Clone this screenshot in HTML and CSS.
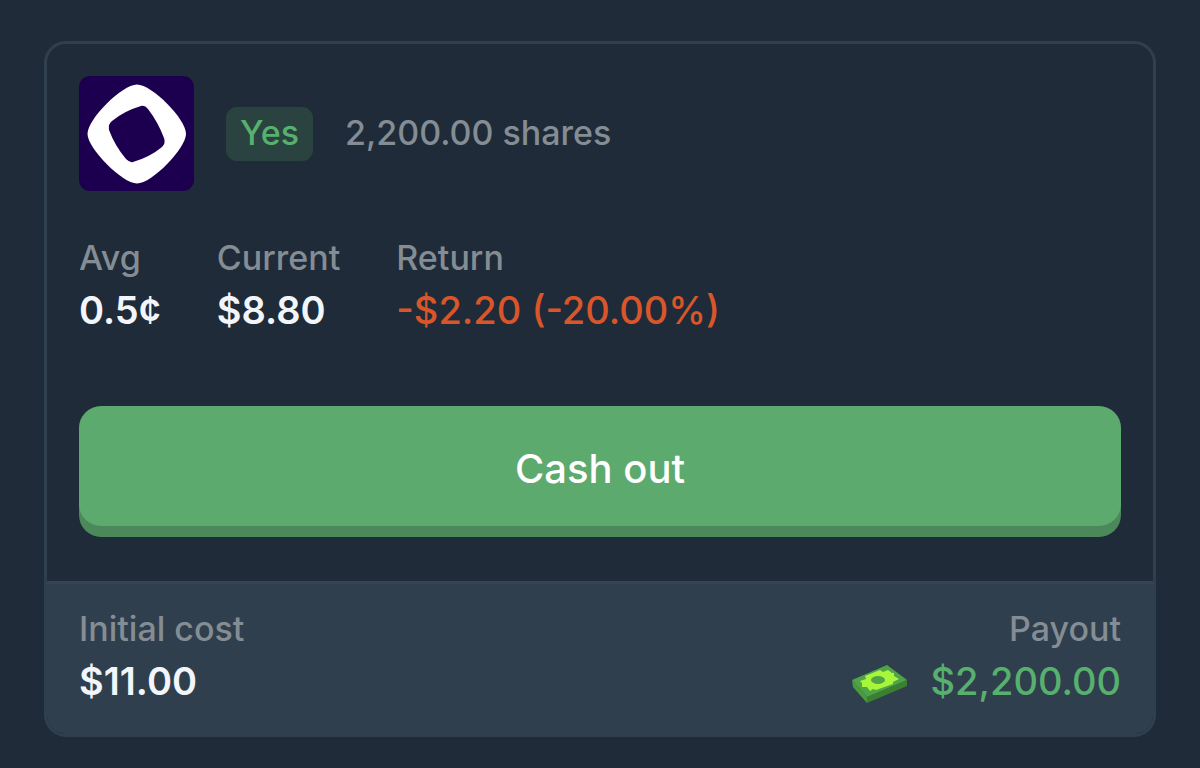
FILE: index.html
```html
<!DOCTYPE html>
<html lang="en">
<head>
<meta charset="utf-8">
<title>Position</title>
<link rel="stylesheet" href="styles.css">
</head>
<body>
<article class="card">
  <div class="body">
    <header class="head">
      <svg class="logo" viewBox="0 0 115 115" aria-hidden="true">
        <rect width="115" height="115" rx="11" fill="#1c004f"/>
        <path fill="#fff" d="M58 8.500C73 8.500 107 43 107 58C107 72 73 107.500 58 107.500C43 107.500 8.500 72 8.500 58C8.500 43 43 8.500 58 8.500Z"/>
        <path fill="#1c004f" d="M62 30Q66 29 69 33Q79 46 85 62Q87 67 83 71Q71 81 54 86Q51 87 47 83Q36 70 30 54Q29 48 33 45Q45 35 62 30Z"/>
      </svg>
      <span class="badge">Yes</span>
      <span class="shares">2,200.00 shares</span>
    </header>
    <dl class="stats">
      <div class="stat"><dt>Avg</dt><dd>0.5¢</dd></div>
      <div class="stat"><dt>Current</dt><dd>$8.80</dd></div>
      <div class="stat"><dt>Return</dt><dd class="loss">-$2.20 (-20.00%)</dd></div>
    </dl>
    <button class="cashout" type="button">Cash out</button>
  </div>
  <dl class="footer">
    <div class="stat"><dt>Initial cost</dt><dd>$11.00</dd></div>
    <div class="stat end">
      <dt>Payout</dt>
      <dd class="payout">
        <svg class="cash" viewBox="0 0 56 38" aria-hidden="true">
          <path fill="#4a9b3e" d="M0 15L15 32V38L1 22Z"/>
          <path fill="#39812f" d="M15 32L55 15V21L15 38Z"/>
          <path fill="#4fa447" d="M0 15L35 0L55 15L15 32Z"/>
          <path fill="#a8f63c" d="M8 16L14 14L13 11L28 5L31 7L36 5L40 8L42 8V11L47 14L41 17L41 19L24 25L21 24L18 26L15 22L10 22V18Z"/>
          <ellipse cx="26" cy="15" rx="7" ry="4" fill="#4fa447"/>
        </svg>
        <span>$2,200.00</span>
      </dd>
    </div>
  </dl>
</article>
</body>
</html>
```
FILE: styles.css
```css
* {
  box-sizing: border-box;
}

body {
  margin: 0;
  padding: 41px 44px 31px;
  background: #1f2b38;
  color: #f2f5fa;
  font-family: Inter, "Liberation Sans", sans-serif;
  font-weight: 500;
}

.card {
  border: 3px solid #303f4e;
  border-radius: 22px;
  overflow: hidden;
}

.body {
  padding: 32px 32px 55px;
}

.head {
  display: flex;
  align-items: center;
  gap: 32px;
}

.logo {
  width: 115px;
  height: 115px;
}

.badge {
  padding: 6px 14px 8px;
  border-radius: 11px;
  background: #2a4340;
  color: #57b06d;
  font-size: 34px;
  line-height: 40px;
}

.shares {
  padding-bottom: 2px;
  color: #848d94;
  font-size: 34px;
  line-height: 40px;
}

.stats {
  display: flex;
  gap: 56px;
  margin: 45px 0 70px;
}

.stat dt {
  color: #848d94;
  font-size: 34px;
  line-height: 44px;
}

.stat dd {
  margin: 4px 0 0;
  font-size: 38px;
  font-weight: 600;
  line-height: 52px;
}

.stat .loss {
  color: #d9562b;
  font-weight: 500;
}

.cashout {
  display: block;
  width: 100%;
  height: 120px;
  padding: 4px 0 0;
  border: 0;
  border-radius: 22px;
  background: #5caa6e;
  box-shadow: 0 11px 0 #4b885a;
  color: #fff;
  font: inherit;
  font-size: 40px;
}

.footer {
  display: flex;
  justify-content: space-between;
  margin: 0;
  padding: 23px 32px 27px;
  border-top: 3px solid #354352;
  background: #303f4e;
}

.end {
  text-align: right;
}

.stat .payout {
  display: flex;
  align-items: center;
  gap: 22px;
  color: #57b06d;
  font-weight: 500;
}

.cash {
  width: 56px;
  height: 38px;
  margin-top: 6px;
}
```
